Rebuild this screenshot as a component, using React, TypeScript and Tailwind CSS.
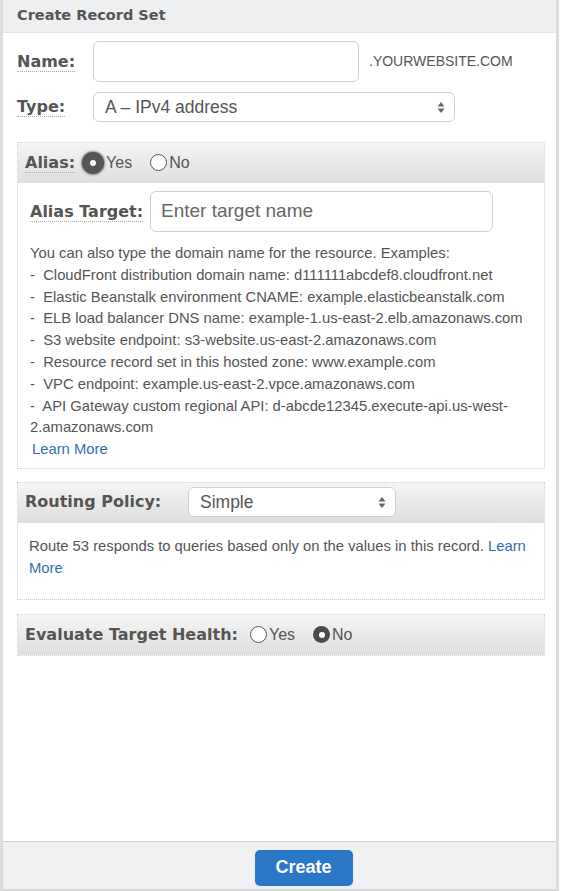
import React from "react";

const examples = [
  "CloudFront distribution domain name: d111111abcdef8.cloudfront.net",
  "Elastic Beanstalk environment CNAME: example.elasticbeanstalk.com",
  "ELB load balancer DNS name: example-1.us-east-2.elb.amazonaws.com",
  "S3 website endpoint: s3-website.us-east-2.amazonaws.com",
  "Resource record set in this hosted zone: www.example.com",
  "VPC endpoint: example.us-east-2.vpce.amazonaws.com",
];

const label = "font-['DejaVu_Sans',sans-serif] font-bold text-[16px] text-[#555]";
const under = "border-b border-dotted border-[#aaa]";

function Arrows() {
  return (
    <svg width="8" height="13" viewBox="0 0 8 13" className="shrink-0">
      <path d="M4 1 L7.5 5.5 H0.5 Z" fill="#666" />
      <path d="M4 12 L7.5 7.5 H0.5 Z" fill="#666" />
    </svg>
  );
}

function Radio({ on, big, text }: { on?: boolean; big?: boolean; text: string }) {
  return (
    <span className="flex items-center">
      {on ? (
        big ? (
          <span className="w-[22px] h-[22px] rounded-full bg-[#555] shadow-[0_0_2px_1px_#888] flex items-center justify-center">
            <span className="w-[6px] h-[6px] rounded-full bg-white" />
          </span>
        ) : (
          <span className="w-[17px] h-[17px] rounded-full bg-[#4a4a4a] flex items-center justify-center">
            <span className="w-[6px] h-[6px] rounded-full bg-white" />
          </span>
        )
      ) : (
        <span className="w-[17px] h-[17px] rounded-full border border-[#555] bg-white" />
      )}
      <span className="text-[16px] text-[#555] ml-[2px]">{text}</span>
    </span>
  );
}

const panelHead =
  "h-[40px] flex items-center px-[7px] bg-gradient-to-b from-[#f5f5f5] to-[#dedede] border-b border-dotted border-[#cfcfcf]";

export default function App() {
  return (
    <div className="w-[559px] h-[891px] flex flex-col bg-white border-x-[3px] border-[#dcdcdc] font-['Liberation_Sans',Arial,sans-serif]">
      <div className="h-[33px] shrink-0 bg-[#eeeff1] border-b border-dotted border-[#d8d8d8] flex items-center pl-[14px]">
        <span className="font-['DejaVu_Sans',sans-serif] font-bold text-[14.5px] text-[#555]">Create Record Set</span>
      </div>

      <div className="flex-1 pl-[14px] pr-[11px] pt-[8px]">
        <div className="flex items-center h-[41px]">
          <span className={`${label} w-[76px] shrink-0`}>
            <span className={under}>Name:</span>
          </span>
          <div className="w-[266px] h-[41px] rounded-[6px] border border-[#cfcfcf] bg-white" />
          <span className="ml-[10px] text-[14px] text-[#555]">.YOURWEBSITE.COM</span>
        </div>

        <div className="flex items-center h-[30px] mt-[10px]">
          <span className={`${label} w-[76px] shrink-0`}>
            <span className={under}>Type:</span>
          </span>
          <div className="w-[362px] h-[30px] rounded-[6px] border border-[#cfcfcf] bg-white flex items-center justify-between pl-[11px] pr-[9px]">
            <span className="text-[17.5px] text-[#555]">A – IPv4 address</span>
            <Arrows />
          </div>
        </div>

        <div className="mt-[20px] border border-dotted border-[#cfcfcf]">
          <div className={panelHead}>
            <span className={`${label} mr-[7px]`}>
              <span className={under}>Alias:</span>
            </span>
            <Radio on big text="Yes" />
            <span className="ml-[18px]">
              <Radio text="No" />
            </span>
          </div>
          <div className="pl-[12px] pr-[6px] pt-[8px] pb-[7px]">
            <div className="flex items-center">
              <span className={`${label} w-[120px] shrink-0`}>
                <span className={under}>Alias Target:</span>
              </span>
              <div className="w-[343px] h-[41px] rounded-[6px] border border-[#cfcfcf] bg-white flex items-center pl-[10px]">
                <span className="text-[19px] text-[#666]">Enter target name</span>
              </div>
            </div>
            <div className="mt-[11px] text-[14.8px] leading-[21.8px] text-[#555]">
              <div>You can also type the domain name for the resource. Examples:</div>
              {examples.map((e) => (
                <div key={e} className="whitespace-nowrap">-&nbsp; {e}</div>
              ))}
              <div>-&nbsp; API Gateway custom regional API: d-abcde12345.execute-api.us-west-2.amazonaws.com</div>
              <div className="pl-[2px] text-[#2f6fb5]">Learn More</div>
            </div>
          </div>
        </div>

        <div className="mt-[13px] border border-dotted border-[#cfcfcf]">
          <div className={panelHead}>
            <span className={`${label} w-[163px] shrink-0`}>Routing Policy:</span>
            <div className="w-[208px] h-[30px] rounded-[6px] border border-[#cfcfcf] bg-white flex items-center justify-between pl-[11px] pr-[9px]">
              <span className="text-[17.5px] text-[#555]">Simple</span>
              <Arrows />
            </div>
          </div>
          <div className="h-[76px] pl-[11px] pr-[6px] pt-[13px] text-[14.8px] leading-[21.8px] text-[#555]">
            Route 53 responds to queries based only on the values in this record.{" "}
            <span className="text-[#2f6fb5]">Learn More</span>
          </div>
        </div>

        <div className="mt-[14px] border border-dotted border-[#cfcfcf]">
          <div className={`${panelHead} border-b-0`}>
            <span className={`${label} mr-[12px]`}>Evaluate Target Health:</span>
            <Radio text="Yes" />
            <span className="ml-[18px]">
              <Radio on text="No" />
            </span>
          </div>
        </div>
      </div>

      <div className="h-[50px] shrink-0 bg-[#eff0f2] border-t border-[#cfcfcf] border-b-[2px] border-b-[#d8d8d8] flex items-center justify-center pl-[48px]">
        <button className="w-[98px] h-[36px] rounded-[5px] bg-[#2b78c8] text-white text-[18px] font-bold font-['Liberation_Sans',Arial,sans-serif] mt-[4px]">
          Create
        </button>
      </div>
    </div>
  );
}
